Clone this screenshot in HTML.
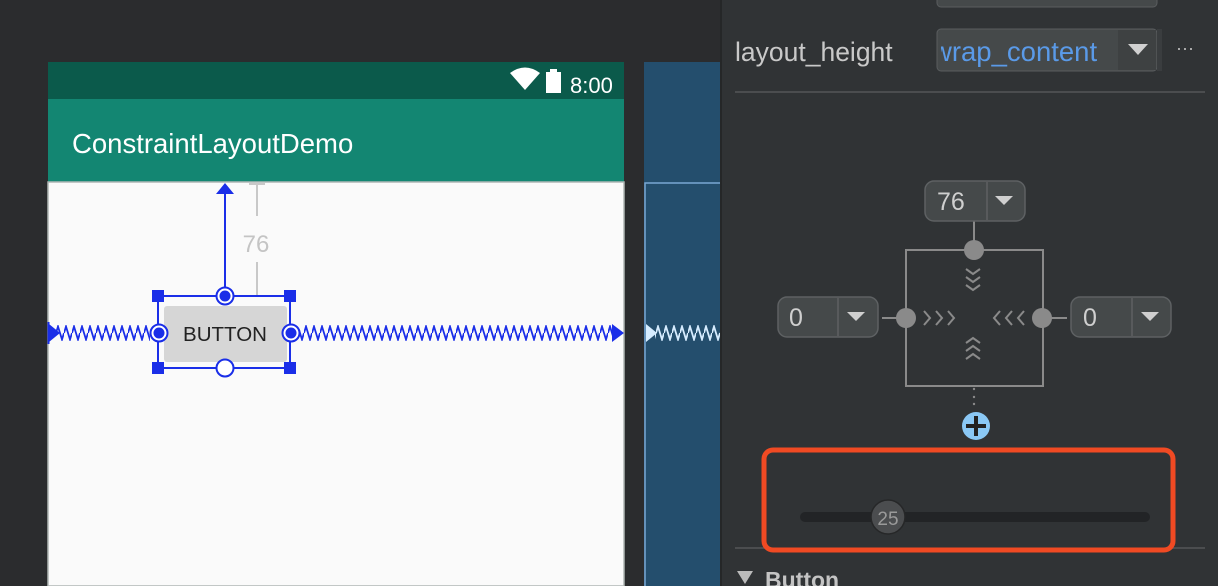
<!DOCTYPE html>
<html><head><meta charset="utf-8"><style>
body{margin:0;width:1218px;height:586px;overflow:hidden;background:#2b2c2e;font-family:"Liberation Sans",sans-serif}
</style></head><body>
<svg width="1218" height="586" viewBox="0 0 1218 586" style="position:absolute;left:0;top:0">
<defs>
<pattern id="zz" x="0" y="325" width="8" height="16" patternUnits="userSpaceOnUse">
<polyline points="0,8 2,1.5 6,14.5 8,8" fill="none" stroke="#1a2ee8" stroke-width="1.8"/>
</pattern>
<pattern id="zz2" x="0" y="325" width="8" height="16" patternUnits="userSpaceOnUse">
<polyline points="0,8 2,1.5 6,14.5 8,8" fill="none" stroke="#d6ecff" stroke-width="1.8"/>
</pattern>
<clipPath id="dd"><rect x="941" y="29" width="177" height="42"/></clipPath>
</defs>
<rect width="1218" height="586" fill="#2b2c2e"/>
<!-- phone -->
<rect x="48" y="62" width="576" height="37" fill="#0b5a4b"/>
<rect x="48" y="99" width="576" height="83" fill="#138672"/>
<rect x="48" y="182" width="576" height="404" fill="#fafafa" stroke="#b0b6b4" stroke-width="1.5"/>
<text x="72" y="153" font-size="27.5" fill="#fff">ConstraintLayoutDemo</text>
<path d="M510 73 Q525 62 540 73 L525 90 Z" fill="#fff"/>
<rect x="546" y="72" width="15" height="21" fill="#fff"/><rect x="550" y="69" width="7" height="4" fill="#fff"/>
<text x="570" y="93" font-size="22" fill="#fff">8:00</text>
<!-- dimension -->
<path d="M249 184h16M257 184v32M257 262v34M249 296h16" stroke="#c8c8c8" stroke-width="2" fill="none"/>
<text x="256" y="252" font-size="24" fill="#c4c4c4" text-anchor="middle">76</text>
<!-- arrow up -->
<line x1="225" y1="190" x2="225" y2="296" stroke="#1a2ee8" stroke-width="2"/>
<path d="M216 194 L225 183 L234 194Z" fill="#1a2ee8"/>
<!-- zigzags -->
<rect x="56" y="325" width="94" height="16" fill="url(#zz)"/>
<rect x="300" y="325" width="312" height="16" fill="url(#zz)"/>
<path d="M49 324 L49 342 L60 333Z" fill="#1a2ee8"/><line x1="48.5" y1="322" x2="48.5" y2="344" stroke="#1a2ee8" stroke-width="2"/>
<path d="M612 324 L612 342 L624 333Z" fill="#1a2ee8"/>
<!-- button -->
<rect x="164" y="306" width="123" height="56" rx="3" fill="#d6d6d6"/>
<text x="225" y="341" font-size="20.5" fill="#222" text-anchor="middle">BUTTON</text>
<rect x="158" y="296" width="132" height="72" fill="none" stroke="#1a2ee8" stroke-width="2"/>
<rect x="152" y="290" width="12" height="12" fill="#1a2ee8"/><rect x="284" y="290" width="12" height="12" fill="#1a2ee8"/>
<rect x="152" y="362" width="12" height="12" fill="#1a2ee8"/><rect x="284" y="362" width="12" height="12" fill="#1a2ee8"/>
<g stroke="#1a2ee8" stroke-width="2" fill="#fff">
<circle cx="225" cy="296" r="8.5"/><circle cx="159" cy="333" r="8.5"/><circle cx="291" cy="333" r="8.5"/><circle cx="225" cy="368" r="8.5"/>
</g>
<g fill="#1a2ee8"><circle cx="225" cy="296" r="5.5"/><circle cx="159" cy="333" r="5.5"/><circle cx="291" cy="333" r="5.5"/></g>
<!-- blueprint -->
<rect x="644" y="62" width="76" height="524" fill="#244e6d"/>
<path d="M645 586 V183 H720" stroke="#7aa7d3" stroke-width="1.5" fill="none"/>
<rect x="655" y="325" width="65" height="16" fill="url(#zz2)"/>
<path d="M646 324 L646 342 L657 333Z" fill="#d6ecff"/>
<!-- right panel -->
<rect x="720" y="0" width="498" height="586" fill="#303335"/>
<line x1="721" y1="0" x2="721" y2="586" stroke="#252728" stroke-width="2"/>
<rect x="937" y="-20" width="220" height="27" rx="4" fill="#45494a" stroke="#5a5d5f"/>
<text x="735" y="61" font-size="26.5" fill="#c9c9c9">layout_height</text>
<rect x="937" y="29" width="220" height="42" rx="4" fill="#45494a" stroke="#5a5d5f"/>
<rect x="1118" y="30" width="38" height="40" fill="#3e4142"/>
<rect x="1157" y="29" width="5" height="42" fill="#3a3d3f"/>
<text x="932" y="61" font-size="27.5" fill="#5a9ae8" clip-path="url(#dd)">wrap_content</text>
<path d="M1128 44h20l-10 11z" fill="#d0d0d0"/>
<text x="1185" y="54" font-size="18" fill="#bbb" text-anchor="middle">···</text>
<line x1="735" y1="92" x2="1205" y2="92" stroke="#545658" stroke-width="1.5"/>
<!-- constraint widget -->
<g stroke="#8a8a8a" stroke-width="2" fill="none">
<rect x="906" y="250" width="137" height="136"/>
<line x1="974" y1="221" x2="974" y2="250"/>
<line x1="882" y1="318" x2="906" y2="318"/><line x1="1042" y1="318" x2="1067" y2="318"/>
<path d="M966 269l7 5 7-5M966 277l7 5 7-5M966 285l7 5 7-5"/>
<path d="M966 343l7-5 7 5M966 351l7-5 7 5M966 359l7-5 7 5"/>
<path d="M924 311l6 7-6 7M936 311l6 7-6 7M948 311l6 7-6 7"/>
<path d="M1000 311l-6 7 6 7M1012 311l-6 7 6 7M1024 311l-6 7 6 7"/>
</g>
<g fill="#8a8a8a"><circle cx="974" cy="250" r="10"/><circle cx="906" cy="318" r="10"/><circle cx="1042" cy="318" r="10"/>
<circle cx="974" cy="389" r="1.2"/><circle cx="974" cy="397" r="1.2"/><circle cx="974" cy="404" r="1.2"/></g>
<g font-size="25" fill="#cfcfcf">
<rect x="925" y="181" width="100" height="40" rx="9" fill="#45494a" stroke="#5e6163" stroke-width="1.5"/>
<line x1="987" y1="182" x2="987" y2="220" stroke="#5e6163" stroke-width="1.5"/>
<text x="937" y="210">76</text><path d="M995 196h18l-9 9z"/>
<rect x="778" y="297" width="100" height="40" rx="9" fill="#45494a" stroke="#5e6163" stroke-width="1.5"/>
<line x1="838" y1="298" x2="838" y2="336" stroke="#5e6163" stroke-width="1.5"/>
<text x="789" y="326">0</text><path d="M847 312h18l-9 9z"/>
<rect x="1071" y="297" width="100" height="40" rx="9" fill="#45494a" stroke="#5e6163" stroke-width="1.5"/>
<line x1="1132" y1="298" x2="1132" y2="336" stroke="#5e6163" stroke-width="1.5"/>
<text x="1083" y="326">0</text><path d="M1141 312h18l-9 9z"/>
</g>
<circle cx="976" cy="426" r="14" fill="#8ac8f5"/>
<path d="M966 426h20M976 416v20" stroke="#222" stroke-width="4"/>
<!-- slider -->
<line x1="735" y1="548" x2="1205" y2="548" stroke="#545658" stroke-width="1.5"/>
<rect x="764" y="450" width="409" height="100" rx="9" fill="#303335" stroke="#f04a23" stroke-width="5"/>
<rect x="800" y="512" width="350" height="10" rx="5" fill="#222426"/>
<circle cx="888" cy="517" r="17" fill="#4b4d4f" stroke="#262728" stroke-width="1.5"/>
<text x="888" y="525" font-size="19" fill="#9a9a9a" text-anchor="middle">25</text>
<path d="M737 571h16l-8 13z" fill="#bbb"/>
<text x="765" y="588" font-size="23" font-weight="bold" fill="#c4c4c4">Button</text>
</svg>
</body></html>
